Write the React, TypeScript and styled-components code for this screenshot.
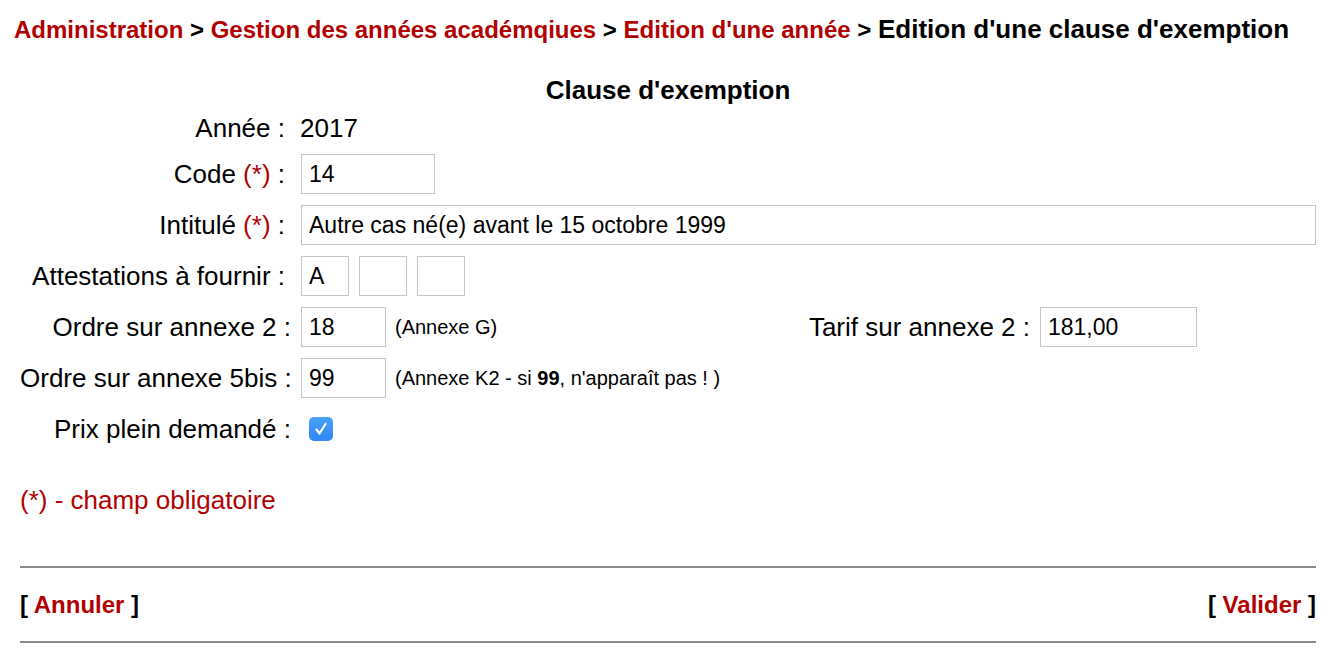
import styled, { createGlobalStyle } from "styled-components";

const RED = "#b20000";

function Check() {
  return (
    <CheckBox>
      <svg width="18" height="18" viewBox="0 0 18 18">
        <path d="M4.5 9.5 L7.5 13.5 L13.5 4" fill="none" stroke="#fff" strokeWidth="2.2" strokeLinecap="round" strokeLinejoin="round" />
      </svg>
    </CheckBox>
  );
}

function App() {
  return (
    <>
      <GlobalStyle />
      <Page>
        <Breadcrumb>
          <Crumb>Administration</Crumb> &gt; <Crumb>Gestion des années académqiues</Crumb> &gt;{" "}
          <Crumb>Edition d'une année</Crumb> &gt; <Current>Edition d'une clause d'exemption</Current>
        </Breadcrumb>
        <Content>
          <Title>Clause d'exemption</Title>
          <Form>
            <Label>Année :</Label>
            <Value>2017</Value>

            <Label>
              Code <Req>(*)</Req> :
            </Label>
            <Field>
              <Input $w={134} defaultValue="14" />
            </Field>

            <Label>
              Intitulé <Req>(*)</Req> :
            </Label>
            <Field>
              <Input $w="100%" defaultValue="Autre cas né(e) avant le 15 octobre 1999" />
            </Field>

            <Label>Attestations à fournir :</Label>
            <Field>
              <Input $w={48} defaultValue="A" />
              <Input $w={48} defaultValue="" />
              <Input $w={48} defaultValue="" />
            </Field>

            <Label $tight>Ordre sur annexe 2 :</Label>
            <Cell>
              <Input $w={85} defaultValue="18" />
              <Note>(Annexe G)</Note>
            </Cell>
            <SideLabel>Tarif sur annexe 2 :</SideLabel>
            <Cell>
              <Input $w={157} defaultValue="181,00" />
            </Cell>
            <Cell />

            <Label $tight>Ordre sur annexe 5bis :</Label>
            <Field>
              <Input $w={85} defaultValue="99" />
              <Note>
                (Annexe K2 - si <b>99</b>, n'apparaît pas ! )
              </Note>
            </Field>

            <Label $tight>Prix plein demandé :</Label>
            <Field>
              <Check />
            </Field>
          </Form>

          <Mandatory>(*) - champ obligatoire</Mandatory>

          <Rule />
          <Actions>
            <Action>
              [ <ActionLink>Annuler</ActionLink> ]
            </Action>
            <Action>
              [ <ActionLink>Valider</ActionLink> ]
            </Action>
          </Actions>
          <Rule />
        </Content>
      </Page>
    </>
  );
}

export default App;

const GlobalStyle = createGlobalStyle`
  body {
    margin: 0;
    background: #fff;
    color: #000;
    font-family: "Liberation Sans", Arial, sans-serif;
  }
`;

const Page = styled.div`
  padding-top: 15px;
`;

const Breadcrumb = styled.div`
  padding-left: 14px;
  font-size: 24px;
  font-weight: bold;
  line-height: 28px;
  white-space: nowrap;
`;

const Crumb = styled.span`
  color: ${RED};
`;

const Current = styled.span`
  font-size: 26px;
`;

const Content = styled.div`
  margin: 0 14px 0 20px;
`;

const Title = styled.div`
  margin-top: 31px;
  text-align: center;
  font-size: 26px;
  font-weight: bold;
  line-height: 30px;
`;

const Form = styled.div`
  margin-top: 8px;
  display: grid;
  grid-template-columns: 281px 1fr auto 157px 119px;
  grid-template-rows: 30px;
  grid-auto-rows: 40px;
  row-gap: 11px;
`;

const Label = styled.div<{ $tight?: boolean }>`
  grid-column: 1;
  align-self: center;
  padding-right: ${(p) => (p.$tight ? "10px" : "16px")};
  text-align: right;
  font-size: 26px;
  line-height: 30px;
  white-space: nowrap;
`;

const SideLabel = styled(Label)`
  grid-column: 3;
  padding-right: 10px;
`;

const Req = styled.span`
  color: ${RED};
`;

const Value = styled.div`
  grid-column: 2 / -1;
  align-self: center;
  font-size: 26px;
  line-height: 30px;
  margin-left: -1px;
`;

const Cell = styled.div`
  display: flex;
  align-items: center;
  gap: 10px;
`;

const Field = styled(Cell)`
  grid-column: 2 / -1;
`;

const Input = styled.input<{ $w: number | string }>`
  box-sizing: border-box;
  width: ${(p) => (typeof p.$w === "number" ? `${p.$w}px` : p.$w)};
  height: 40px;
  margin: 0;
  padding: 0 7px;
  border: 1px solid #c4c4c4;
  border-radius: 0;
  background: #fff;
  color: #000;
  font-family: "Liberation Sans", Arial, sans-serif;
  font-size: 23px;
  outline: none;
`;

const Note = styled.span`
  margin-left: -1px;
  font-size: 20px;
  white-space: nowrap;
`;

const CheckBox = styled.span`
  margin-left: 8px;
  width: 24px;
  height: 24px;
  border-radius: 5px;
  background: linear-gradient(#4aa0fb, #2f86f6);
  display: flex;
  align-items: center;
  justify-content: center;
`;

const Mandatory = styled.div`
  margin-top: 36px;
  margin-bottom: 51px;
  color: ${RED};
  font-size: 26px;
  line-height: 30px;
`;

const Rule = styled.div`
  height: 2px;
  background: #8a8a8a;
`;

const Actions = styled.div`
  display: flex;
  justify-content: space-between;
  align-items: center;
  height: 73px;
`;

const Action = styled.div`
  font-size: 24px;
  font-weight: bold;
  line-height: 28px;
`;

const ActionLink = styled.span`
  color: ${RED};
`;
